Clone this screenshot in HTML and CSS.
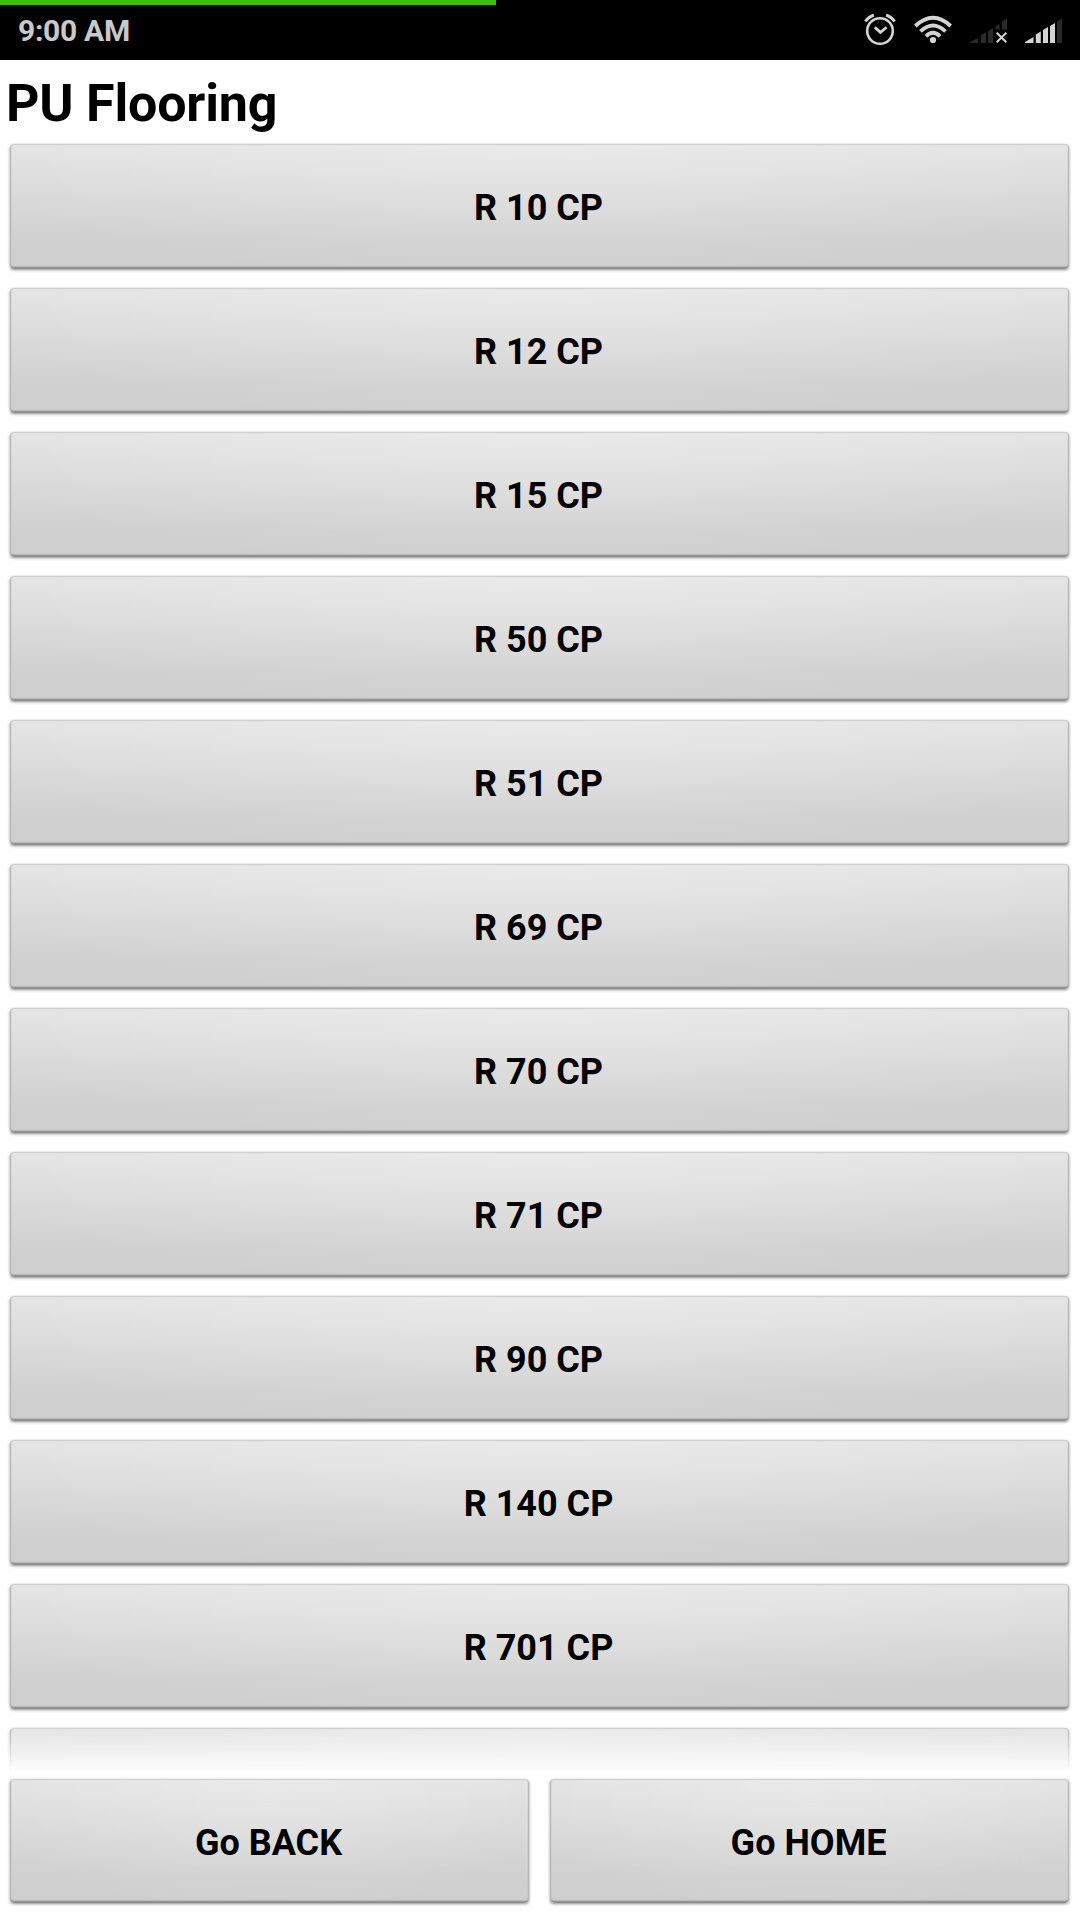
FILE: index.html
```
<!DOCTYPE html>
<html lang="en">
<head>
  <meta charset="UTF-8" />
  <title>PU Flooring</title>
  <link rel="stylesheet" href="styles.css">
</head>
<body>
  <div class="statusbar">
    <div class="progress"></div>
    <span class="time">9:00 AM</span>
    <svg class="icons" width="216" height="60" viewBox="0 0 216 60">
      <!-- alarm -->
      <g fill="none" stroke="#d4d4d4">
        <circle cx="16" cy="31" r="12.8" stroke-width="2.6" />
        <path d="M10.8 27.2l5.6 5.2 6.2-5.2" stroke-width="2.8" />
        <path d="M1.5 21.5Q4 17.3 9.8 15M30.5 21.5Q28 17.3 22.2 15" stroke-width="3" />
      </g>
      <!-- wifi -->
      <g fill="none" stroke="#d4d4d4" stroke-width="3.8">
        <path d="M51.3 26Q69 9.5 86.7 26" />
        <path d="M56.5 31.3Q69 19.5 81.5 31.3" />
        <path d="M62 36.3Q69 29.3 76 36.3" />
      </g>
      <circle cx="69" cy="40" r="3.1" fill="#d4d4d4" />
      <!-- sim 1, no service -->
      <g fill="#292929">
        <path d="M106 43v-1l8-4v5zM117 43v-8l5-3v11zM124 43V31.500l5-3.500V43zM131.500 29.500v-3l4-2.500v5.500zM138 29.500V21.500l5-3.500v11.500z" />
      </g>
      <path d="M132.7 32.7l9.600 9.600M142.300 32.700l-9.600 9.600" stroke="#d4d4d4" stroke-width="2" />
      <!-- sim 2 -->
      <path d="M161 43v-1l8.5-5v6zM171.8 43v-8.5l5-3V43zM179 43V30l5-3v16zM186 43V26l5-3v20z" fill="#d4d4d4" />
      <path d="M193 43V21.5l5-3.5v25z" fill="#292929" />
    </svg>
  </div>

  <h1>PU Flooring</h1>

  <div class="list">
    <button>R 10 CP</button>
    <button>R 12 CP</button>
    <button>R 15 CP</button>
    <button>R 50 CP</button>
    <button>R 51 CP</button>
    <button>R 69 CP</button>
    <button>R 70 CP</button>
    <button>R 71 CP</button>
    <button>R 90 CP</button>
    <button>R 140 CP</button>
    <button>R 701 CP</button>
    <button></button>
  </div>

  <div class="footer">
    <button>Go BACK</button>
    <button>Go HOME</button>
  </div>
</body>
</html>
```

FILE: styles.css
```
* {
  box-sizing: border-box;
}
body {
  margin: 0;
  height: 1920px;
  display: flex;
  flex-direction: column;
  overflow: hidden;
  background: white;
  color: black;
  font-family: Roboto, sans-serif;
}
.statusbar {
  position: relative;
  flex: none;
  height: 60px;
  padding: 0 0 0 18px;
  display: flex;
  justify-content: space-between;
  background: black;
}
.progress {
  position: absolute;
  top: 0;
  left: 0;
  width: 496px;
  height: 5px;
  background: #40bf0a;
}
.time {
  color: #c9c9c9;
  font-size: 30px;
  font-weight: bold;
  line-height: 61px;
  letter-spacing: -0.3px;
}
h1 {
  flex: none;
  height: 77px;
  margin: 0;
  padding-left: 6px;
  font-size: 52px;
  font-weight: bold;
  line-height: 87px;
  letter-spacing: -0.2px;
}
.list {
  position: relative;
  flex: none;
  height: 1636px;
  padding: 7px 11px 0 10px;
  display: flex;
  flex-direction: column;
  gap: 19px;
  overflow: hidden;
}
/* last row fades out at the scroll edge */
.list::after {
  content: "";
  position: absolute;
  left: 0;
  right: 0;
  bottom: 0;
  height: 45px;
  background: linear-gradient(rgba(255,255,255,0), white);
}
button {
  flex: none;
  height: 125px;
  padding: 3px 2px 0 0;
  border: none;
  border-radius: 4px;
  background: radial-gradient(ellipse 58% 110% at 50% 0, rgba(255,255,255,0.25), rgba(255,255,255,0)), linear-gradient(#e4e4e4, #d0d0d0 80%, #cfcfcf);
  box-shadow: 0 1px 3px rgba(0,0,0,0.45), inset 0 1px 1px #cfcfcf, inset 1px 0 1px #b4b4b4, inset -1px 0 1px #b4b4b4, inset 0 -2px 2px #808080;
  color: black;
  font-family: inherit;
  font-size: 36px;
  font-weight: bold;
}
.footer {
  padding: 6px 11px 0 10px;
  display: flex;
  gap: 21px;
}
.footer button {
  flex: 1;
  height: 124px;
  padding-top: 4px;
}
```
